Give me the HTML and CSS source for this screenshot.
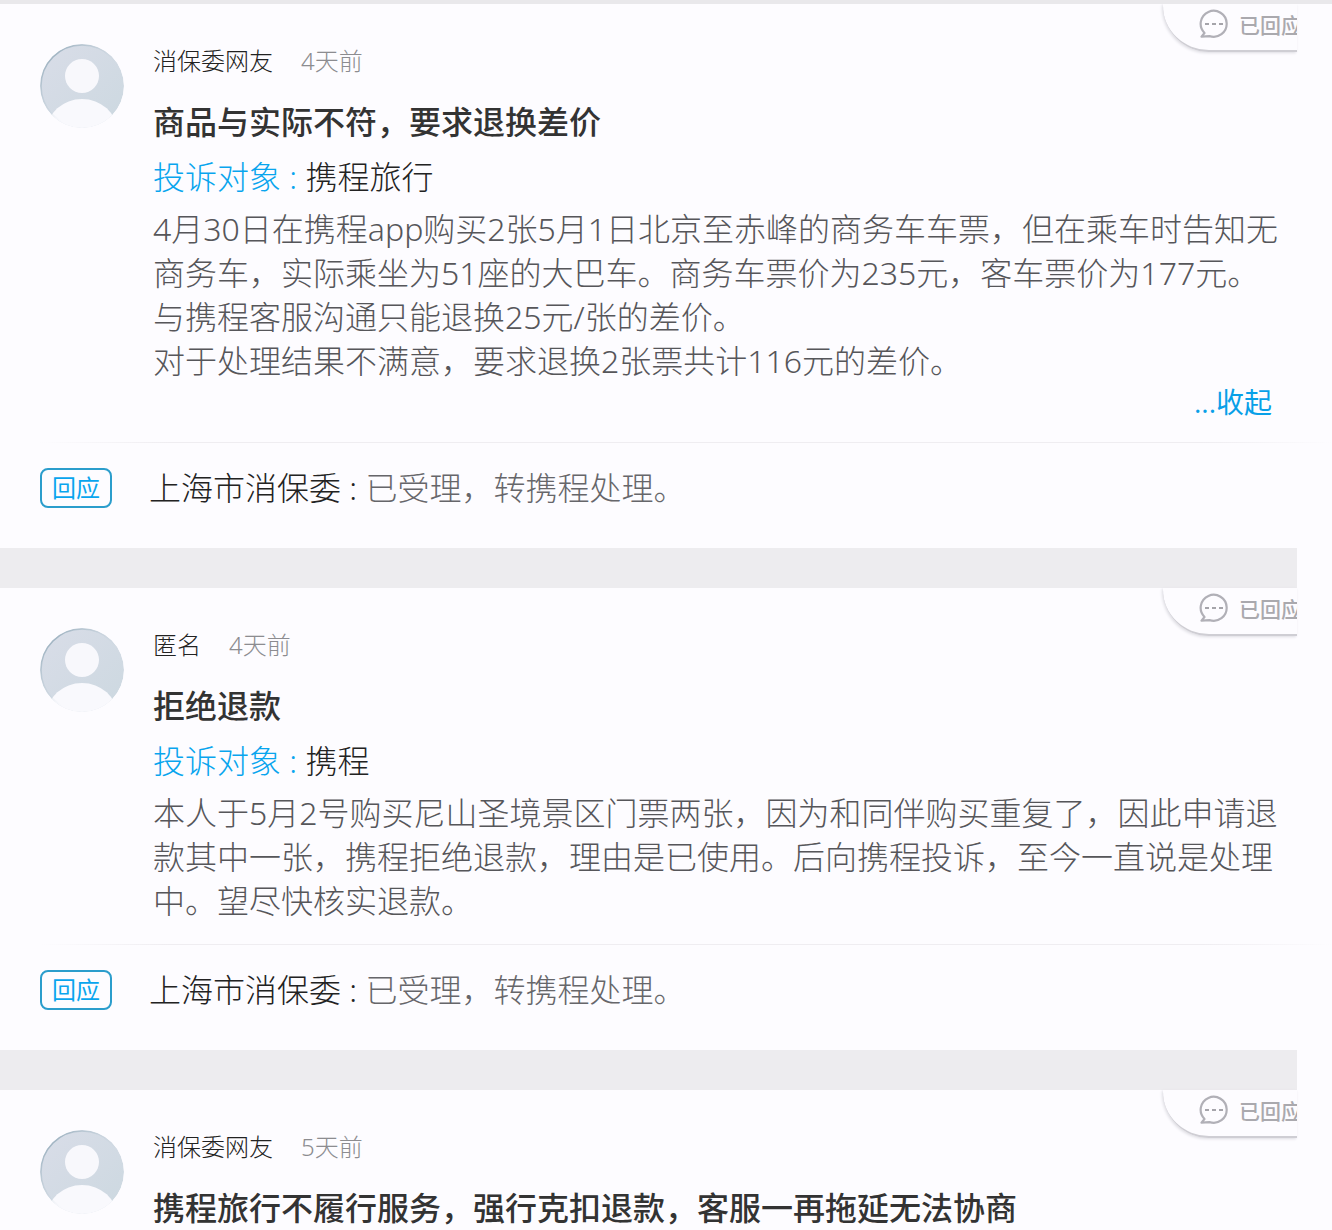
FILE: index.html
```html
<!doctype html>
<html lang="zh-CN">
<head>
<meta charset="utf-8">
<title>投诉列表</title>
<link rel="stylesheet" href="styles.css">
</head>
<body>
<svg class="defs" aria-hidden="true">
  <defs>
    <linearGradient id="face" x1="0" y1="0" x2="1" y2="1"><stop offset="0" stop-color="#d9dde8"/><stop offset="1" stop-color="#ccd8e0"/></linearGradient>
    <linearGradient id="edge" x1="0" y1="0" x2="1" y2="1"><stop offset="0" stop-color="#7f9bac"/><stop offset=".6" stop-color="#ccd8e0" stop-opacity="0"/></linearGradient>
    <clipPath id="round"><circle cx="42" cy="42" r="42"/></clipPath>
  </defs>
  <symbol id="avatar" viewBox="0 0 84 84">
    <g clip-path="url(#round)">
      <circle cx="42" cy="42" r="42" fill="url(#face)"/>
      <circle cx="42" cy="32" r="17" fill="#f8f8fc"/>
      <ellipse cx="42" cy="87" rx="35" ry="32" fill="#f9f9fd"/>
    </g>
    <circle cx="42" cy="42" r="41" fill="none" stroke="url(#edge)" stroke-width="1.5"/>
  </symbol>
  <symbol id="bubble" viewBox="0 0 30 32">
    <path d="M5.5 25A13 13 0 1 1 10.5 28.1L2.5 28.6Z" fill="none" stroke="#b1b0b7" stroke-width="2.2" stroke-linejoin="round"/>
    <path d="M6 16h4M13 16h4M20 16h4" stroke="#a5a4aa" stroke-width="2"/>
  </symbol>
</svg>
<main class="list">
  <article class="card">
    <div class="status"><svg><use href="#bubble"/></svg><span>已回应</span></div>
    <div class="main">
      <svg class="avatar"><use href="#avatar"/></svg>
      <div class="info">
        <div class="meta"><span class="name">消保委网友</span><time>4天前</time></div>
        <h2>商品与实际不符，要求退换差价</h2>
        <p class="target"><span>投诉对象 : </span>携程旅行</p>
        <p class="desc">4月30日在携程app购买2张5月1日北京至赤峰的商务车车票，但在乘车时告知无商务车，实际乘坐为51座的大巴车。商务车票价为235元，客车票价为177元。<br>与携程客服沟通只能退换25元/张的差价。<br>对于处理结果不满意，要求退换2张票共计116元的差价。</p>
        <button class="fold" type="button">...收起</button>
      </div>
    </div>
    <div class="reply"><span class="tag">回应</span><p><b>上海市消保委 : </b>已受理，转携程处理。</p></div>
  </article>
  <article class="card">
    <div class="status"><svg><use href="#bubble"/></svg><span>已回应</span></div>
    <div class="main">
      <svg class="avatar"><use href="#avatar"/></svg>
      <div class="info">
        <div class="meta"><span class="name">匿名</span><time>4天前</time></div>
        <h2>拒绝退款</h2>
        <p class="target"><span>投诉对象 : </span>携程</p>
        <p class="desc">本人于5月2号购买尼山圣境景区门票两张，因为和同伴购买重复了，因此申请退款其中一张，携程拒绝退款，理由是已使用。后向携程投诉，至今一直说是处理中。望尽快核实退款。</p>
      </div>
    </div>
    <div class="reply"><span class="tag">回应</span><p><b>上海市消保委 : </b>已受理，转携程处理。</p></div>
  </article>
  <article class="card">
    <div class="status"><svg><use href="#bubble"/></svg><span>已回应</span></div>
    <div class="main">
      <svg class="avatar"><use href="#avatar"/></svg>
      <div class="info">
        <div class="meta"><span class="name">消保委网友</span><time>5天前</time></div>
        <h2>携程旅行不履行服务，强行克扣退款，客服一再拖延无法协商</h2>
      </div>
    </div>
  </article>
</main>
</body>
</html>
```
FILE: styles.css
```css
*{box-sizing:border-box}
body{margin:0;background:#fdfcff;color:#222;font-family:"Noto Sans","Noto Sans CJK SC",sans-serif;font-weight:300;font-size:32px}
h2,p{margin:0}
.defs{position:absolute;width:0;height:0}
.list{border-top:4px solid #e9e8eb;overflow:hidden}
.card{position:relative}
.card + .card::before{content:"";display:block;height:40px;margin-right:35px;background:#edecef}
.main{display:flex;gap:29px;padding:40px 40px 21px}
.avatar{flex:none;width:84px;height:84px}
.info{flex:1;min-width:0}
.meta{display:flex;gap:28px;font-size:24px;line-height:34px}
.name{color:#222}
.meta time{color:#8c8c90}
h2{margin-top:16px;font-size:32px;line-height:56px;font-weight:500;color:#333}
.target{line-height:54px}
.target span{color:#08a5ee}
.desc{margin-top:3px;line-height:44px;color:#56565a}
.fold{display:block;margin-left:auto;margin-right:20px;padding:0;border:0;background:none;color:#08a0e8;font:400 28px/38px "Open Sans","Noto Sans CJK SC",sans-serif;cursor:pointer}
.reply{position:relative;display:flex;align-items:center;gap:37px;padding:26px 40px 40px}
.reply::before{content:"";position:absolute;top:0;left:40px;right:0;height:1px;background:linear-gradient(90deg,#fdfcff,#efedf1 10%,#efedf1 90%,#fdfcff)}
.tag{flex:none;width:72px;height:40px;border:2px solid #2b9dcc;border-radius:8px;color:#08a5ee;font-size:24px;font-weight:400;line-height:36px;text-align:center}
.reply p{line-height:40px;color:#66666a}
.reply b{font-weight:300;color:#222}
/* corner label, runs off the right edge of the card */
.status{position:absolute;top:0;right:35px;display:flex;gap:10px;width:134px;height:48px;padding:4px 0 0 36px;border-bottom:2px solid #cfced4;border-bottom-left-radius:46px;overflow:hidden;color:#aaa9ae;font-size:21px;font-weight:500;line-height:34px;white-space:nowrap;box-shadow:-1px 1px 3px #dddce2}
.card + .card .status{top:40px}
.status svg{flex:none;width:30px;height:32px}
```
